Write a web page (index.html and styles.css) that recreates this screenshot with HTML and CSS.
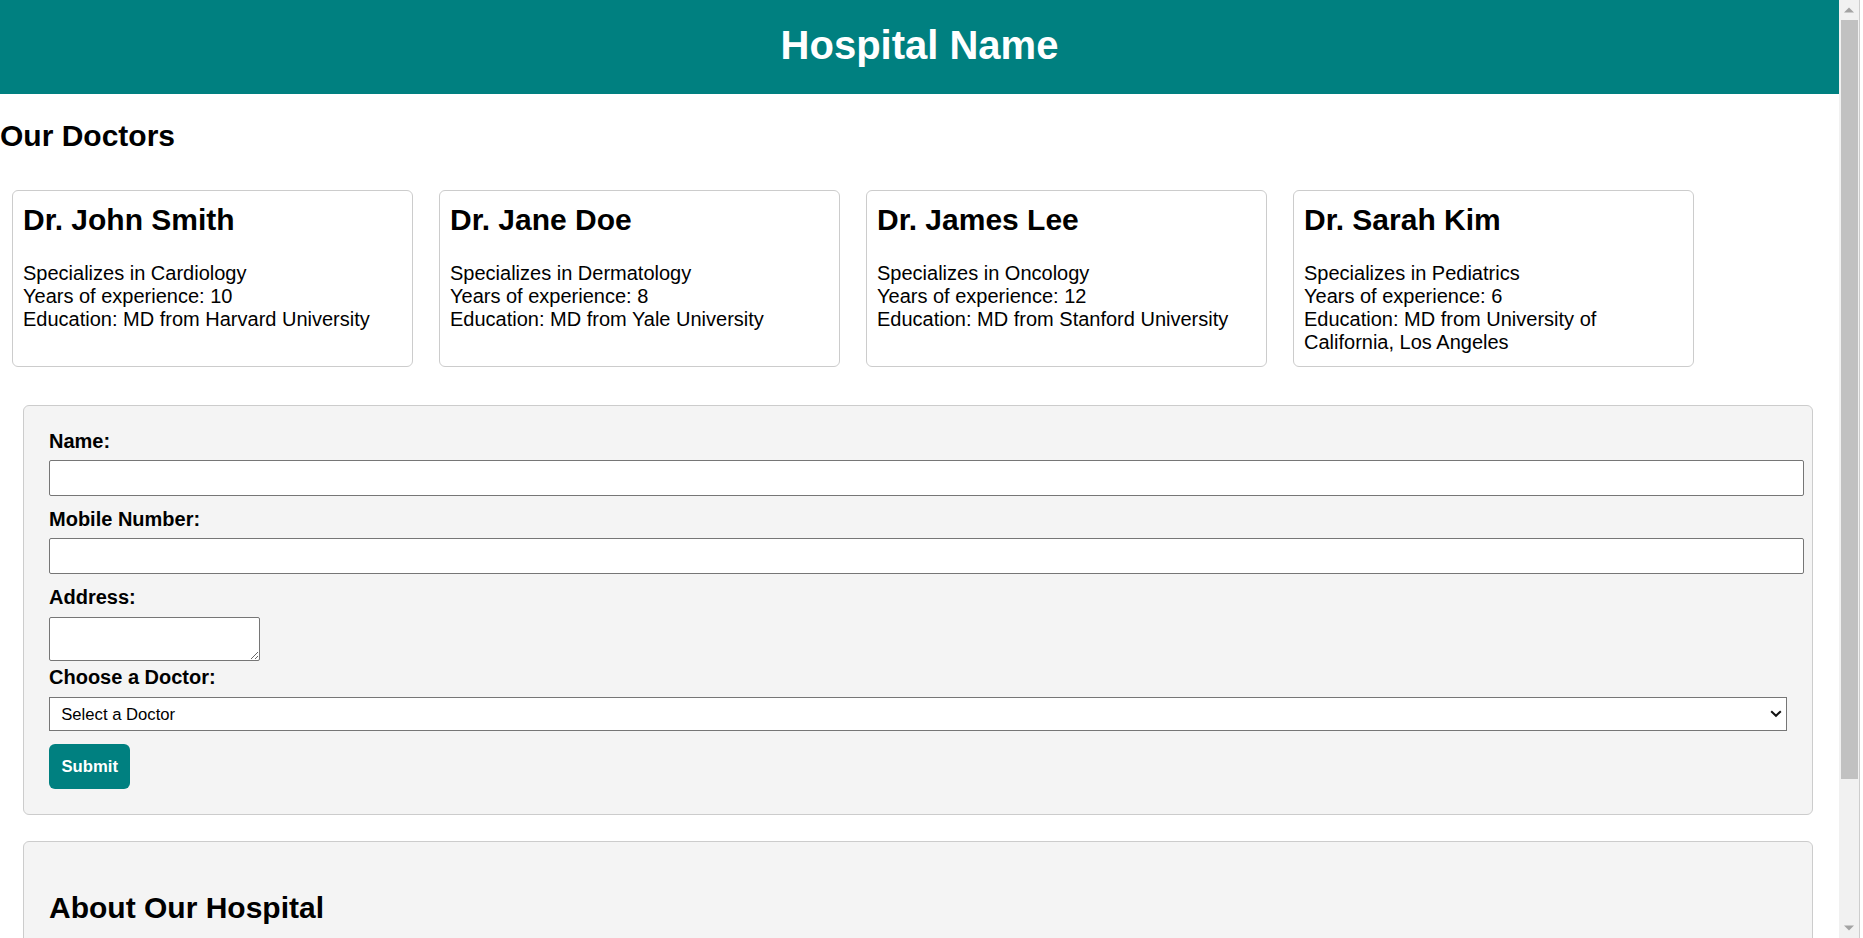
FILE: index.html
```html
<!DOCTYPE html>
<html lang="en">
<head>
<meta charset="utf-8">
<title>Hospital Name</title>
<link rel="stylesheet" href="styles.css">
</head>
<body>
<div class="page">
  <header class="site-header">
    <h1 class="site-title">Hospital Name</h1>
  </header>

  <section class="doctors">
    <h2 class="section-title">Our Doctors</h2>
    <div class="doctor-list">
      <div class="doctor-card">
        <h2 class="doctor-name">Dr. John Smith</h2>
        <p class="doctor-info">Specializes in Cardiology<br>Years of experience: 10<br>Education: MD from Harvard University</p>
      </div>
      <div class="doctor-card">
        <h2 class="doctor-name">Dr. Jane Doe</h2>
        <p class="doctor-info">Specializes in Dermatology<br>Years of experience: 8<br>Education: MD from Yale University</p>
      </div>
      <div class="doctor-card">
        <h2 class="doctor-name">Dr. James Lee</h2>
        <p class="doctor-info">Specializes in Oncology<br>Years of experience: 12<br>Education: MD from Stanford University</p>
      </div>
      <div class="doctor-card">
        <h2 class="doctor-name">Dr. Sarah Kim</h2>
        <p class="doctor-info">Specializes in Pediatrics<br>Years of experience: 6<br>Education: MD from University of California, Los Angeles</p>
      </div>
    </div>
  </section>

  <form class="panel appointment-form">
    <label class="field-label" for="name">Name:</label>
    <input class="text-input" type="text" id="name" name="name">
    <label class="field-label" for="mobile">Mobile Number:</label>
    <input class="text-input" type="tel" id="mobile" name="mobile">
    <label class="field-label" for="address">Address:</label>
    <textarea class="text-area" id="address" name="address"></textarea>
    <label class="field-label" for="doctor">Choose a Doctor:</label>
    <div class="select-wrap">
      <select class="doctor-select" id="doctor" name="doctor">
        <option value="">Select a Doctor</option>
        <option>Dr. John Smith</option>
        <option>Dr. Jane Doe</option>
        <option>Dr. James Lee</option>
        <option>Dr. Sarah Kim</option>
      </select>
      <svg class="select-arrow" width="12" height="8" viewBox="0 0 12 8" aria-hidden="true">
        <polyline points="1.2,1.2 6,5.8 10.8,1.2" fill="none" stroke="#111" stroke-width="2"/>
      </svg>
    </div>
    <button class="submit-btn" type="submit">Submit</button>
  </form>

  <section class="panel about">
    <h2 class="about-title">About Our Hospital</h2>
    <p class="about-text">Our hospital is dedicated to providing high quality care to every patient.</p>
    <p class="about-text">We offer a wide range of medical services with experienced specialists.</p>
  </section>
</div>

<div class="scrollbar" aria-hidden="true">
  <div class="sb-button">
    <svg width="10" height="6" viewBox="0 0 10 6"><polygon points="0,5.5 5,0.5 10,5.5" fill="#a3a3a3"/></svg>
  </div>
  <div class="sb-track">
    <div class="sb-thumb"></div>
  </div>
  <div class="sb-button">
    <svg width="10" height="6" viewBox="0 0 10 6"><polygon points="0,0.5 5,5.5 10,0.5" fill="#a3a3a3"/></svg>
  </div>
</div>
</body>
</html>
```

FILE: styles.css
```css
html, body {
  height: 100%;
}
body {
  margin: 0;
  display: flex;
  overflow: hidden;
  font-family: "Liberation Sans", Arial, sans-serif;
  font-size: 20px;
  color: #000;
  background: #fff;
}

.page {
  flex: 1;
  min-width: 0;
  height: 100%;
  overflow: hidden;
}

/* scrollbar column */
.scrollbar {
  width: 20px;
  flex: 0 0 20px;
  height: 100%;
  background: #f1f1f1;
  border-right: 1px solid #cdcdcd;
  margin-right: 3px;
  display: flex;
  flex-direction: column;
}
.sb-button {
  height: 20px;
  flex: 0 0 20px;
  display: flex;
  align-items: center;
  justify-content: center;
}
.sb-button svg {
  display: block;
}
.sb-track {
  flex: 1;
}
.sb-thumb {
  width: 17px;
  margin-left: 2px;
  height: 759px;
  background: #c1c1c1;
}

.site-header {
  background: #008080;
  color: #fff;
  text-align: center;
  padding: 22px 0 26px;
}
.site-title {
  margin: 0;
  font-size: 40px;
  line-height: 46px;
  font-weight: bold;
}

.section-title {
  font-size: 30px;
  font-weight: bold;
  margin: 24.9px 0;
}

.doctor-list {
  display: flex;
  gap: 26px;
  padding: 12.5px 0 12.5px 12px;
  align-items: stretch;
}
.doctor-card {
  width: 401px;
  box-sizing: border-box;
  border: 1px solid #cccccc;
  border-radius: 6px;
  padding: 12px 10px;
  background: #fff;
}
.doctor-name {
  font-size: 30px;
  margin: 0 0 24.9px;
}
.doctor-info {
  margin: 20px 0 0;
  line-height: 23px;
}

.panel {
  margin: 25.8px 26px 0 23px;
  background: #f4f4f4;
  border: 1px solid #cccccc;
  border-radius: 6px;
  padding: 24px 25px 25px;
}
.about {
  padding-top: 25px;
}

.field-label {
  display: block;
  font-weight: bold;
  line-height: 23px;
  margin-bottom: 7px;
}
.text-input {
  display: block;
  width: 100%;
  box-sizing: content-box;
  padding: 7.25px;
  border: 1px solid #767676;
  border-radius: 2px;
  background: #fff;
  font-family: "Liberation Sans", Arial, sans-serif;
  font-size: 16.67px;
  line-height: 19px;
  height: 19px;
  margin: 0 0 12.3px;
}
.text-area {
  display: block;
  width: 211px;
  height: 44px;
  box-sizing: border-box;
  border: 1px solid #767676;
  border-radius: 2px;
  background: #fff;
  margin: 8px 0 5px;
  padding: 2px;
  font-family: "Liberation Mono", monospace;
  font-size: 16.67px;
}
.select-wrap {
  position: relative;
  margin: 8px 0 13.4px;
}
.doctor-select {
  display: block;
  width: 100%;
  box-sizing: border-box;
  height: 34px;
  margin: 0;
  padding: 0 30px 0 11.25px;
  border: 1px solid #767676;
  border-radius: 0;
  background-color: #fff;
  -webkit-appearance: none;
  appearance: none;
  font-family: "Liberation Sans", Arial, sans-serif;
  font-size: 16.67px;
  color: #000;
}
.select-arrow {
  position: absolute;
  right: 5px;
  top: 13px;
  pointer-events: none;
}
.submit-btn {
  display: inline-block;
  background: #008080;
  color: #fff;
  border: none;
  border-radius: 6px;
  padding: 13px 12.5px;
  font-family: "Liberation Sans", Arial, sans-serif;
  font-size: 16.67px;
  font-weight: bold;
  line-height: 19px;
  vertical-align: top;
}

.about-title {
  font-size: 30px;
  font-weight: bold;
  margin: 23.6px 0 24.9px;
}
.about-text {
  margin: 20px 0;
  line-height: 23px;
}
```
